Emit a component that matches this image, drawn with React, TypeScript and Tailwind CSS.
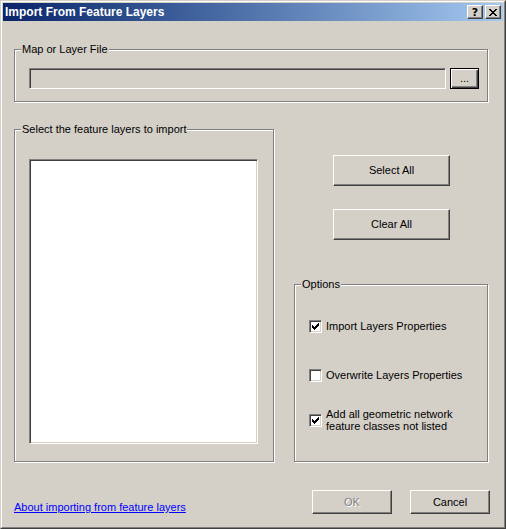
import type { ReactNode } from "react";

const raised =
  "border border-t-white border-l-white border-r-[#404040] border-b-[#404040] shadow-[inset_-1px_-1px_0_#808080]";
const sunken =
  "border border-t-[#808080] border-l-[#808080] border-r-white border-b-white shadow-[inset_1px_1px_0_#404040,inset_-1px_-1px_0_#d4d0c8]";
const etched =
  "border border-[#808080] shadow-[inset_1px_1px_0_#fff,1px_1px_0_#fff]";

function GroupBox({
  label,
  className,
  children,
}: {
  label: string;
  className: string;
  children: ReactNode;
}) {
  return (
    <div className={`relative ${etched} ${className}`}>
      <span className="absolute left-[6px] -top-[7px] px-px leading-[13px] bg-[#d4d0c8]">
        {label}
      </span>
      {children}
    </div>
  );
}

function Check() {
  return (
    <svg width="7" height="7" viewBox="0 0 7 7" shapeRendering="crispEdges">
      <rect x="6" y="0" width="1" height="1" fill="#000" />
      <rect x="5" y="1" width="2" height="1" fill="#000" />
      <rect x="0" y="2" width="1" height="1" fill="#000" />
      <rect x="4" y="2" width="3" height="1" fill="#000" />
      <rect x="0" y="3" width="2" height="1" fill="#000" />
      <rect x="3" y="3" width="3" height="1" fill="#000" />
      <rect x="0" y="4" width="5" height="1" fill="#000" />
      <rect x="1" y="5" width="3" height="1" fill="#000" />
      <rect x="2" y="6" width="1" height="1" fill="#000" />
    </svg>
  );
}

function CheckBox({ checked }: { checked: boolean }) {
  return (
    <div
      className={`w-[13px] h-[13px] shrink-0 bg-white flex items-center justify-center ${sunken}`}
    >
      {checked && <Check />}
    </div>
  );
}

function Button({
  label,
  className,
  disabled,
}: {
  label: string;
  className: string;
  disabled?: boolean;
}) {
  return (
    <div
      className={`flex items-center justify-center bg-[#d4d0c8] ${raised} ${className} ${
        disabled ? "text-[#808080] [text-shadow:1px_1px_0_#fff]" : ""
      }`}
    >
      {label}
    </div>
  );
}

export default function App() {
  return (
    <div className="w-[506px] h-[529px] border border-t-[#d4d0c8] border-l-[#d4d0c8] border-r-[#404040] border-b-[#404040] bg-[#d4d0c8] font-['Liberation_Sans',Arial,sans-serif] text-[11px] text-black">
      <div className="h-full border border-t-white border-l-white border-r-[#808080] border-b-[#808080] p-px flex flex-col">
        {/* Title bar */}
        <div className="h-[18px] shrink-0 flex items-center pl-[2px] pr-[2px] bg-linear-to-r from-[#0a246a] to-[#a6caf0]">
          <span className="text-white font-bold text-[12px] leading-[14px]">
            Import From Feature Layers
          </span>
          <div className="ml-auto flex gap-[2px]">
            <div
              className={`w-[16px] h-[14px] bg-[#d4d0c8] flex items-center justify-center ${raised}`}
            >
              <span className="font-bold text-[11px] leading-[11px] font-['DejaVu_Sans',sans-serif]">
                ?
              </span>
            </div>
            <div
              className={`w-[16px] h-[14px] bg-[#d4d0c8] flex items-center justify-center ${raised}`}
            >
              <svg width="8" height="7" viewBox="0 0 8 7" shapeRendering="crispEdges">
                <path
                  d="M0 0h2v1h-2zM6 0h2v1h-2zM1 1h2v1h-2zM5 1h2v1h-2zM2 2h4v1h-4zM3 3h2v1h-2zM2 4h4v1h-4zM1 5h2v1h-2zM5 5h2v1h-2zM0 6h2v1h-2zM6 6h2v1h-2z"
                  fill="#000"
                />
              </svg>
            </div>
          </div>
        </div>

        {/* Content */}
        <div className="flex-1 flex flex-col pl-[11px]">
          <GroupBox label="Map or Layer File" className="mt-[28px] w-[474px] h-[53px]">
            <div className="flex gap-[4px] pt-[18px] pl-[14px]">
              <div className={`w-[417px] h-[21px] bg-[#d4d0c8] ${sunken}`} />
              <div className="w-[29px] h-[21px] border border-black shadow-[inset_1px_1px_0_#fff,inset_-1px_-1px_0_#404040,inset_-2px_-2px_0_#808080] flex items-center justify-center leading-[13px]">
                ...
              </div>
            </div>
          </GroupBox>

          <div className="flex mt-[27px]">
            <GroupBox
              label="Select the feature layers to import"
              className="w-[260px] h-[333px]"
            >
              <div className="pt-[29px] pl-[14px]">
                <div className={`w-[229px] h-[285px] bg-white ${sunken}`} />
              </div>
            </GroupBox>

            <div className="ml-[20px] flex flex-col">
              <Button label="Select All" className="mt-[26px] ml-[39px] w-[117px] h-[31px]" />
              <Button label="Clear All" className="mt-[23px] ml-[39px] w-[117px] h-[31px]" />
              <GroupBox label="Options" className="mt-[44px] w-[194px] h-[178px]">
                <div className="flex flex-col pt-[35px] pl-[14px] leading-[13px]">
                  <div className="flex items-center gap-[4px] h-[13px]">
                    <CheckBox checked />
                    <span>Import Layers Properties</span>
                  </div>
                  <div className="flex items-center gap-[4px] h-[13px] mt-[36px]">
                    <CheckBox checked={false} />
                    <span>Overwrite Layers Properties</span>
                  </div>
                  <div className="flex items-center gap-[4px] mt-[26px]">
                    <CheckBox checked />
                    <span className="leading-[12px]">
                      Add all geometric network
                      <br />
                      feature classes not listed
                    </span>
                  </div>
                </div>
              </GroupBox>
            </div>
          </div>

          <div className="flex items-start mt-[28px] pr-[13px]">
            <a
              href="#"
              className="mt-[11px] text-[#0000ff] underline leading-[13px]"
            >
              About importing from feature layers
            </a>
            <div className="ml-auto flex gap-[18px]">
              <Button label="OK" className="w-[80px] h-[24px]" disabled />
              <Button label="Cancel" className="w-[80px] h-[24px]" />
            </div>
          </div>
        </div>
      </div>
    </div>
  );
}
